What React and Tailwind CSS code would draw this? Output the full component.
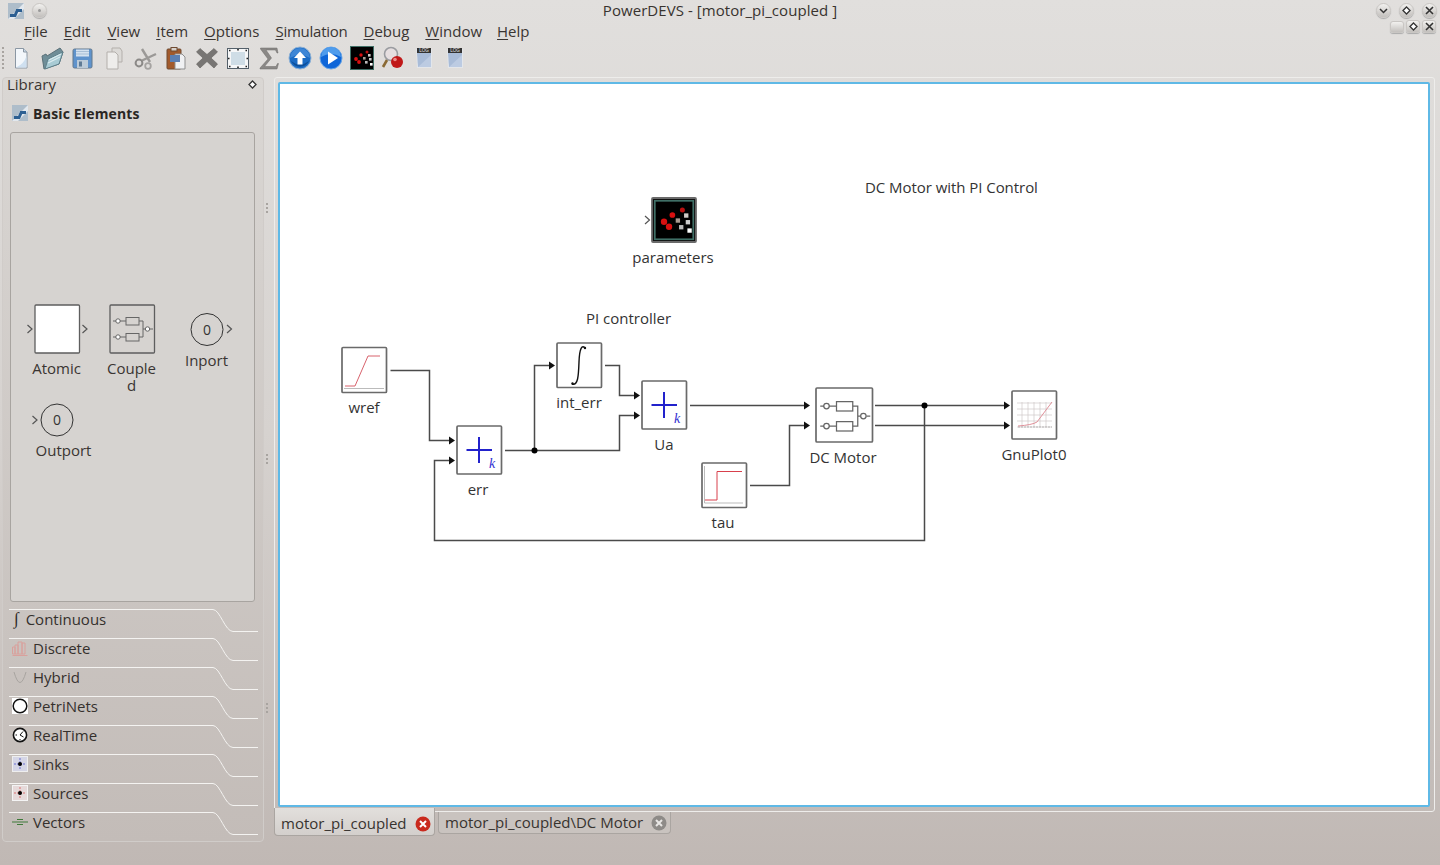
import { useState } from 'react';

const MENU = [
  { label: 'File' },
  { label: 'Edit' },
  { label: 'View', className: 'ml-[1px]' },
  { label: 'Item' },
  { label: 'Options' },
  { label: 'Simulation', className: 'tracking-[-0.25px]' },
  { label: 'Debug' },
  { label: 'Window' },
  { label: 'Help', className: '-ml-[1px]' },
];

function Mnemonic({ label, className = '' }) {
  return (
    <span className={`px-2 ${className}`}>
      <span className="underline decoration-1 underline-offset-2">{label[0]}</span>
      {label.slice(1)}
    </span>
  );
}

function AppIcon({ className = '' }) {
  return (
    <svg viewBox="0 0 16 16" className={className}>
      <rect width="16" height="16" fill="#aebdca" />
      <path d="M0 16 L16 0 V6 L6 16 Z" fill="#e2e8ee" />
      <path d="M2 12.5 H7 L9 8 M8 7.5 H14" fill="none" stroke="#2c5f92" strokeWidth="3" />
    </svg>
  );
}

function WinButton({ children, size = 'w-[15px] h-[15px] rounded-full' }) {
  return (
    <span className={`flex items-center justify-center ${size} bg-gradient-to-b from-[#f2f1ef] to-[#c3c0bd] border border-[#c9c6c3] shadow-[0_1px_1px_#aaa]`}>
      {children}
    </span>
  );
}

const ChevronGlyph = () => (
  <svg viewBox="0 0 9 9" className="w-[9px] h-[9px]"><path d="M1 3 L4.5 6.5 L8 3" fill="none" stroke="#333" strokeWidth="1.5" /></svg>
);
const DiamondGlyph = () => (
  <svg viewBox="0 0 9 9" className="w-[9px] h-[9px]"><path d="M4.5 1 L8 4.5 L4.5 8 L1 4.5 Z" fill="#fff" stroke="#333" strokeWidth="1.3" /></svg>
);
const CrossGlyph = () => (
  <svg viewBox="0 0 9 9" className="w-[9px] h-[9px]"><path d="M1 1 L8 8 M8 1 L1 8" fill="none" stroke="#333" strokeWidth="1.6" /></svg>
);

const ParamsArt = () => (
  <>
    <rect x="0.5" y="0.5" width="23" height="23" fill="#000" stroke="#3f6f66" />
    <circle cx="6" cy="13" r="1.9" fill="#d81010" /><circle cx="9" cy="16" r="1.9" fill="#d81010" />
    <circle cx="11" cy="9" r="1.7" fill="#d81010" /><circle cx="17" cy="6" r="1.5" fill="#b81010" />
    <rect x="13" y="11" width="2.6" height="2.6" fill="#a89a90" /><rect x="18" y="8" width="2.6" height="2.6" fill="#d0ccc8" />
    <rect x="19" y="12" width="2.6" height="2.6" fill="#ccc" /><rect x="15" y="15" width="2.6" height="2.6" fill="#bbb" />
    <rect x="20" y="17" width="2.6" height="2.6" fill="#fff" />
  </>
);

const LogIcon = () => (
  <>
    <path d="M4 3 H20 V22 H5 Z" fill="#e3e6ea" />
    <path d="M5 7 H19 V21 H6 Z" fill="#a9bcd8" />
    <path d="M6 21 L19 9 V21 Z" fill="#bccbe2" />
    <rect x="5" y="2" width="14" height="5" fill="#333" />
    <text x="12" y="6" fontSize="4.6" fill="#e8e8e8" textAnchor="middle" className="[font-family:'Liberation_Sans',sans-serif]">LOG</text>
  </>
);

// toolbar glyphs, all on a 24 box
const TOOLS = [
  <g key="new"><path d="M6.5 2.5 H14.5 L18 6 V22 H6.5 Z" fill="#f3f7fb" stroke="#8b97a3" /><path d="M14.5 2.5 V6 H18" fill="#c9d9e8" stroke="#8b97a3" /><path d="M7 21.5 H17.5 V10 Q15 18 7 21.5Z" fill="#cfe0f0" /></g>,
  <g key="open"><path d="M4 23 L2 10 L6 8 L7 10 L20 2 L23 6 L19 18 Z" fill="#6f8e98" stroke="#5a7078" /><path d="M5 23 L8 13 L23 6 L19 18 Z" fill="#a8cbd4" stroke="#5f808a" /><path d="M9 14 L21 8 M8 17 L20 11" fill="none" stroke="#dcecf0" strokeWidth="1.2" /></g>,
  <g key="save"><rect x="2" y="3" width="19" height="19" rx="1.5" fill="#5f93cc" stroke="#63788c" /><rect x="5" y="3.5" width="13" height="7" fill="#d5e2ef" /><path d="M5 5.5 H18 M5 8 H18" stroke="#a8bfd6" /><rect x="6" y="14" width="11" height="8" fill="#bccbd8" /><rect x="8" y="15.5" width="3" height="5" fill="#5e7a94" /></g>,
  <g key="copy"><path d="M10 2 H18 L20 5 V16 H10 Z" fill="#dcdad7" stroke="#b3afab" /><path d="M5 6 H13 L16 9 V23 H5 Z" fill="#eeedeb" stroke="#b3afab" /></g>,
  <g key="cut"><path d="M9 3 L17 16 M23 8 L8 15" fill="none" stroke="#9b9997" strokeWidth="2.4" /><circle cx="6" cy="17" r="3.4" fill="none" stroke="#8c8a88" strokeWidth="2" /><circle cx="15" cy="20" r="2.8" fill="none" stroke="#a5a3a1" strokeWidth="1.8" /></g>,
  <g key="paste"><rect x="3" y="3" width="14" height="20" rx="1" fill="#a25a2c" stroke="#6f4a30" /><rect x="7" y="1.5" width="6" height="3.5" fill="#d8d2cc" stroke="#6f4a30" /><path d="M11 8 H18 L21 11 V23 H11 Z" fill="#f0f1f3" stroke="#8f8f8f" /><rect x="6" y="9" width="10" height="7" fill="#5c7fb2" /></g>,
  <g key="delete"><path d="M5 2.5 L12 8.5 L19 2.5 L22.5 6 L16 12 L22.5 18 L19 22 L12 15.5 L5 22 L1.5 18 L8 12 L1.5 6 Z" fill="#787674" stroke="#625f5d" strokeWidth="0.6" /></g>,
  <g key="select"><rect x="1.5" y="2.5" width="21" height="20" fill="#f6f7f8" stroke="#54606a" /><rect x="5" y="6" width="14" height="13" fill="#cfdde6" /><path d="M12 3 v1.5 M12 20.5 v1.5 M2 12.5 h1.5 M20.5 12.5 h1.5 M3 4.5 h1.5 M19.5 4.5 h1.5 M3 20.5 h1.5 M19.5 20.5 h1.5" stroke="#222" strokeWidth="1.6" /></g>,
  <g key="sigma"><path d="M3.5 2 H20 L21 7 H20 L18.5 4 H9 L14.5 12 L7.5 20.5 H19 L20.5 17.5 H21.5 L20 23 H3 V22 L11 13 L3.5 3 Z" fill="#8a8886" stroke="#6e6c6a" strokeWidth="0.5" /></g>,
  <g key="up"><circle cx="12" cy="12" r="11" fill="#1a6bc4" stroke="#8fb2d6" /><path d="M2 12 A10 10 0 0 1 22 12 Q12 6 2 12" fill="#3d86d6" /><path d="M3 15 A10 10 0 0 0 21 15 Q12 22 3 15" fill="#0d4f9a" /><path d="M12 5.5 L18 12 H14.5 V18.5 H9.5 V12 H6 Z" fill="#fff" /></g>,
  <g key="play"><circle cx="12" cy="12" r="11" fill="#0f66d8" stroke="#6aa6e6" /><path d="M2 11 A10 10 0 0 1 22 11 Q12 5 2 11" fill="#4f9cec" /><path d="M9 5.5 L19 12 L9 18.5 Z" fill="#fff" /></g>,
  <g key="params"><ParamsArt /></g>,
  <g key="debug"><circle cx="10" cy="8" r="6.5" fill="#e6dfe0" stroke="#9a9ca0" strokeWidth="1.6" /><path d="M6 14 L2 21" stroke="#8a6a34" strokeWidth="2.6" /><circle cx="16" cy="16" r="6" fill="#c01818" /><circle cx="14" cy="13.5" r="1.8" fill="#ec8a8a" /></g>,
  <g key="log1"><LogIcon /></g>,
  <g key="log2"><LogIcon /></g>,
];

function Grip({ className = '', dots = [0, 1, 2] }) {
  return (
    <div className={`flex flex-col gap-[2px] ${className}`}>
      {dots.map((d) => <span key={d} className="w-[2px] h-[2px] bg-[#a8a4a0]" />)}
    </div>
  );
}

function Chevron({ x, y }) {
  return <path d={`M${x} ${y - 4} L${x + 4.5} ${y} L${x} ${y + 4}`} fill="none" stroke="#555" strokeWidth="1.2" />;
}

function CoupledArt({ x, y, s = 1 }) {
  return (
    <g transform={`translate(${x} ${y}) scale(${s})`} fill="none" stroke="#666" strokeWidth="1">
      <circle cx="6" cy="12" r="2.2" fill="#fff" />
      <circle cx="6" cy="28" r="2.2" fill="#fff" />
      <path d="M1 12 H4 M8 12 H14 M1 28 H4 M8 28 H14 M27 12 H31 V28 H27 M31 20 H33 M38 20 H41" />
      <rect x="14" y="8.5" width="13" height="7.5" />
      <rect x="14" y="24.5" width="13" height="7.5" />
      <circle cx="35.5" cy="20" r="2.2" fill="#fff" />
    </g>
  );
}

function AtomicTool() {
  return (
    <svg viewBox="19 303 75 58" className="w-[75px] h-[58px]">
      <Chevron x={27.5} y={329} /><Chevron x={82.5} y={329} />
      <rect x="35" y="305" width="44.5" height="48" rx="1" fill="#fff" stroke="#5e5e5e" strokeWidth="1.3" />
    </svg>
  );
}

function CoupledTool() {
  return (
    <svg viewBox="94 303 75 58" className="w-[75px] h-[58px]">
      <rect x="110" y="305" width="44.5" height="48" rx="1" fill="#d6d3d0" stroke="#5e5e5e" strokeWidth="1.3" />
      <CoupledArt x={112} y={309} />
    </svg>
  );
}

function PortCircle({ cx, cy }) {
  return (
    <>
      <circle cx={cx} cy={cy} r="16" fill="none" stroke="#333" strokeWidth="1" />
      <text x={cx} y={cy + 5} textAnchor="middle" fontSize="14" fill="#333" className="[font-family:'Open_Sans',sans-serif]">0</text>
    </>
  );
}

const SECTIONS = [
  { name: 'Continuous', icon: 'integral' },
  { name: 'Discrete', icon: 'discrete' },
  { name: 'Hybrid', icon: 'hybrid' },
  { name: 'PetriNets', icon: 'petri' },
  { name: 'RealTime', icon: 'clock' },
  { name: 'Sinks', icon: 'sinks' },
  { name: 'Sources', icon: 'sources' },
  { name: 'Vectors', icon: 'vectors' },
];

function SectionIcon({ type }) {
  if (type === 'integral') return null;
  return (
    <svg viewBox="0 0 16 16" className="w-4 h-4 shrink-0">
      {type === 'discrete' && <path d="M0.5 14 V7 H3 V14 V5 H6 V14 V2 H10 V14 V3 H13 V14 H0.5 M0.5 15.5 H15.5" fill="none" stroke="#d9a09c" strokeWidth="1" />}
      {type === 'hybrid' && <path d="M2 3 Q8 24 14 3" fill="none" stroke="#a8a4a0" strokeWidth="1" />}
      {type === 'petri' && <><rect width="16" height="16" fill="#fff" /><circle cx="8" cy="8" r="6.8" fill="#fff" stroke="#111" strokeWidth="1.5" /></>}
      {type === 'clock' && <><circle cx="8" cy="8" r="6.6" fill="#fff" stroke="#111" strokeWidth="1.6" /><path d="M8 8 L11 4.5 M8 8 L11.5 10 M3.5 8 H5 M8 12 V13" stroke="#111" strokeWidth="1" fill="none" /></>}
      {type === 'sinks' && <><rect x="0.5" y="0.5" width="15" height="15" fill="#d5d6e6" stroke="#eee" /><path d="M8 2 V14 M2 8 H14" stroke="#6a6fd0" strokeWidth="1" strokeDasharray="2 1" /><circle cx="8" cy="8" r="2" fill="#000" /></>}
      {type === 'sources' && <><rect x="0.5" y="0.5" width="15" height="15" fill="#e6dada" stroke="#f4f4f4" /><path d="M8 2 V14 M2 8 H14" stroke="#d87070" strokeWidth="1" strokeDasharray="2 1" /><circle cx="8" cy="8" r="2" fill="#000" /></>}
      {type === 'vectors' && <path d="M0 8 H4 M12 8 H16 M5 5.5 H11 M4 8 H12 M5 10.5 H11" stroke="#3f7a3a" strokeWidth="1.2" fill="none" />}
    </svg>
  );
}

function SectionTab({ name, icon }) {
  return (
    <div className="relative h-[29px] shrink-0 flex items-center">
      <svg viewBox="0 0 260 29" className="absolute left-0 top-0 w-[260px] h-[29px]">
        <path d="M6 0.5 H210 C217 0.5 222 22.5 230 22.5 H255" fill="none" stroke="#f4f3f1" strokeWidth="1" />
      </svg>
      <div className={`relative flex items-center gap-[5px] pb-[10px] ${icon === 'integral' ? 'pl-[11px]' : 'pl-[9px]'}`}>
        {icon === 'integral' && <span className="[font-family:'Liberation_Serif',serif] italic text-[17px] leading-none mr-[2px]">∫</span>}
        <SectionIcon type={icon} />
        <span className="text-[15px] leading-[20px] text-[#35302d]">{name}</span>
      </div>
    </div>
  );
}

function Block({ x, y, w, h, children }) {
  return (
    <g>
      <rect x={x} y={y} width={w} height={h} rx="1" fill="#fff" stroke="#6a6a6a" strokeWidth="1.7" />
      {children}
    </g>
  );
}

function SumArt({ x, y }) {
  return (
    <>
      <path d={`M${x + 9.5} ${y} H${x + 35} M${x + 22} ${y - 13} V${y + 13}`} stroke="#2222cc" strokeWidth="2" fill="none" />
      <text x={x + 35} y={y + 18} fontSize="14" fill="#2f2fd0" fontStyle="italic" textAnchor="middle" className="[font-family:'Liberation_Serif',serif]">k</text>
    </>
  );
}

function Arrow({ x, y }) {
  return <path d={`M${x - 6} ${y - 4} L${x} ${y} L${x - 6} ${y + 4} Z`} fill="#111" />;
}

const WIRES = [
  'M390.5 370.5 H429.5 V440.5 H450',
  'M505 450.5 H619.5 V415.5 H635',
  'M534.5 450.5 V365.5 H550',
  'M605 365.5 H619.5 V395.5 H635',
  'M690 405.5 H805',
  'M750 485.5 H789.5 V425.5 H805',
  'M875 405.5 H1005',
  'M875 425.5 H1005',
  'M924.5 405.5 V540.5 H434.5 V460.5 H450',
];

const ARROWS = [[455, 440.5], [455, 460.5], [555, 365.5], [640, 395.5], [640, 415.5], [810, 405.5], [810, 425.5], [1010, 405.5], [1010, 425.5]];

const LABELS = [
  { text: 'parameters', className: 'left-[393px] top-[163px]' },
  { text: 'wref', className: 'left-[84px] top-[313px]' },
  { text: 'err', className: 'left-[198px] top-[395px]' },
  { text: 'int_err', className: 'left-[299px] top-[308px]' },
  { text: 'Ua', className: 'left-[384px] top-[350px]' },
  { text: 'DC Motor', className: 'left-[563px] top-[363px]' },
  { text: 'GnuPlot0', className: 'left-[754px] top-[360px]' },
  { text: 'tau', className: 'left-[443px] top-[428px]' },
];

function Diagram() {
  return (
    <div className="relative flex-1 bg-white border-2 border-[#5fb9e6] rounded-[2px]">
      <svg viewBox="280 84 1148 721" className="absolute left-0 top-0 w-[1148px] h-[721px]">
        {/* wires */}
        {WIRES.map((d) => <path key={d} d={d} fill="none" stroke="#4a4a4a" strokeWidth="1.5" />)}
        {ARROWS.map(([x, y]) => <Arrow key={`${x}-${y}`} x={x} y={y} />)}
        <circle cx="534.5" cy="450.5" r="3" fill="#000" />
        <circle cx="924.5" cy="405.5" r="3" fill="#000" />

        {/* parameters */}
        <Chevron x={645} y={220} />
        <rect x="652" y="198" width="44" height="44" rx="1" fill="#111" stroke="#6a6a6a" strokeWidth="1.8" />
        <g transform="translate(654 200) scale(1.67)"><ParamsArt /></g>

        <Block x={342} y={347.5} w={44.5} h={45}>
          <path d="M345 386 H355 L368 356 H380" fill="none" stroke="#d8626c" strokeWidth="1" />
          <path d="M344 388.5 H384" stroke="#bbb" strokeWidth="1" />
        </Block>

        <Block x={457} y={426} w={44.5} h={48}><SumArt x={457} y={450} /></Block>

        <Block x={557} y={343} w={44.5} h={44.5}>
          <path d="M585.5 348.5 C582 344 579.5 348 579 362 C578.5 376 578 386 572 384" fill="none" stroke="#111" strokeWidth="1.4" />
          <circle cx="585" cy="348" r="1.2" fill="#111" />
          <circle cx="572.5" cy="383.5" r="1.2" fill="#111" />
        </Block>

        <Block x={642} y={381} w={44.5} h={48}><SumArt x={642} y={405} /></Block>

        <Block x={816} y={388} w={56.5} h={54}>
          <CoupledArt x={819} y={391} s={1.25} />
        </Block>

        <Block x={702} y={463} w={44.5} h={44.5}>
          <path d="M705 500 H717 V471.5 H742" fill="none" stroke="#d8404c" strokeWidth="1" />
          <path d="M704.5 466 V503 H743" fill="none" stroke="#aaa" strokeWidth="0.8" />
        </Block>

        <Block x={1012} y={391} w={44.5} h={48}>
          <path d="M1017 403 H1052 M1017 409 H1052 M1017 415 H1052 M1017 421 H1052 M1017 427 H1052 M1022 402 V427 M1028 402 V427 M1034 402 V427 M1040 402 V427 M1046 402 V427" stroke="#cfc9c9" strokeWidth="0.7" />
          <path d="M1018 427 H1052" stroke="#aaa" strokeWidth="0.8" strokeDasharray="2 1" />
          <path d="M1018 426 Q1032 425 1037 422 L1052 402" fill="none" stroke="#e0919a" strokeWidth="1" />
        </Block>
      </svg>

      <span className="absolute left-[585px] top-[93px] text-[15px] leading-[20px] text-[#333] whitespace-nowrap tracking-[-0.05px]">DC Motor with PI Control</span>
      <span className="absolute left-[306px] top-[224px] text-[15px] leading-[20px] text-[#333] whitespace-nowrap">PI controller</span>
      {LABELS.map((l) => (
        <span key={l.text} className={`absolute -translate-x-1/2 text-[15px] leading-[20px] text-[#333] whitespace-nowrap ${l.className}`}>{l.text}</span>
      ))}
    </div>
  );
}

export default function App() {
  const [activeTab] = useState(0);

  return (
    <div className="w-[1440px] h-[865px] overflow-hidden flex flex-col bg-gradient-to-b from-[#e1dfdd] via-[#d6d2cf] to-[#c0b8b4] text-[#2f2b28] [font-family:'Open_Sans',sans-serif]">
      {/* title bar */}
      <div className="h-[21px] shrink-0 relative flex items-center pl-2">
        <AppIcon className="w-4 h-4" />
        <span className="ml-[8px]">
          <WinButton><span className="w-[3px] h-[3px] rounded-full bg-[#999]" /></WinButton>
        </span>
        <span className="flex-1 text-center text-[15px] leading-[20px] tracking-[0.06px] text-[#38332f] pl-[17px] -translate-y-[1px]">PowerDEVS - [motor_pi_coupled ]</span>
        <div className="flex gap-2 pr-[3px]">
          <WinButton><ChevronGlyph /></WinButton>
          <WinButton><DiamondGlyph /></WinButton>
          <WinButton><CrossGlyph /></WinButton>
        </div>
      </div>

      {/* menu bar */}
      <div className="h-[22px] shrink-0 relative flex items-center pl-4 pb-[2px] text-[15px] leading-[20px] text-[#3a3532]">
        {MENU.map((m) => <Mnemonic key={m.label} label={m.label} className={m.className} />)}
        <div className="absolute right-[4px] -top-[1px] flex items-center gap-[2px]">
          <WinButton size="w-[14px] h-[12px] rounded-[3px]" />
          <WinButton size="w-[14px] h-[13px] rounded-[3px]"><DiamondGlyph /></WinButton>
          <WinButton size="w-[14px] h-[13px] rounded-[3px]"><CrossGlyph /></WinButton>
        </div>
      </div>

      {/* toolbar */}
      <div className="h-[34px] shrink-0 flex items-center pl-[2px] pb-[4px]">
        <Grip className="mr-[2px]" dots={[0, 1, 2, 3, 4, 5]} />
        <div className="flex gap-[7px] pl-[3px]">
          {TOOLS.map((t, i) => (
            <svg key={i} viewBox="0 0 24 24" className="w-6 h-6">{t}</svg>
          ))}
        </div>
      </div>

      {/* body */}
      <div className="flex-1 min-h-0 flex pl-[2px] pr-[5px]">
        {/* library dock */}
        <aside className="w-[262px] h-[765px] shrink-0 flex flex-col border border-[#d0ccc9] rounded-[4px] bg-gradient-to-b from-[#dad7d4] to-[#c3bcb8]">
          <div className="h-[13px] shrink-0 flex items-center justify-between pl-1 pr-[6px] text-[15px] text-[#3a3532]">
            <span>Library</span>
            <DiamondGlyph />
          </div>
          <div className="h-[41px] shrink-0 flex items-center gap-[5px] pl-[9px] pt-[3px]">
            <AppIcon className="w-4 h-4" />
            <span className="text-[14px] font-bold tracking-[0.15px] text-[#2a2623]">Basic Elements</span>
          </div>
          <div className="ml-[7px] w-[245px] h-[470px] shrink-0 rounded-[3px] border border-[#a8a4a0] bg-[#d6d3d0] pt-[170px] pl-[8px]">
            <div className="grid grid-cols-[75px_75px_75px] text-[15px] leading-[17px] text-[#3a3532] text-center">
              <div>
                <AtomicTool />
                <div className="-mt-[1px]">Atomic</div>
              </div>
              <div>
                <CoupledTool />
                <div className="w-[56px] -mt-[1px] mx-auto break-all">Coupled</div>
              </div>
              <div>
                <svg viewBox="169 303 75 50" className="w-[75px] h-[50px]">
                  <PortCircle cx={207} cy={329.5} />
                  <Chevron x={227} y={329} />
                </svg>
                <div className="-mt-[1px]">Inport</div>
              </div>
              <div className="mt-[2px]">
                <svg viewBox="19 396 75 48" className="w-[75px] h-[48px]">
                  <PortCircle cx={57} cy={420} />
                  <Chevron x={32.5} y={420} />
                </svg>
                <div className="-mt-[2px] translate-x-[7px]">Outport</div>
              </div>
            </div>
          </div>
          <div className="mt-[7px] flex flex-col">
            {SECTIONS.map((s) => <SectionTab key={s.name} name={s.name} icon={s.icon} />)}
          </div>
        </aside>

        {/* splitter */}
        <div className="w-[10px] shrink-0 flex flex-col items-center h-[765px] relative">
          <Grip className="absolute top-[126px] -translate-x-[2px]" />
          <Grip className="absolute top-[377px] -translate-x-[2px]" />
          <Grip className="absolute top-[626px] -translate-x-[2px]" />
        </div>

        {/* mdi area */}
        <main className="flex-1 min-w-0 flex flex-col">
          <div className="h-[735px] shrink-0 flex pt-[4px] pb-[4px] pl-[3px] pr-[4px] rounded-[3px] border border-[#eeedeb]">
            <Diagram />
          </div>
          <div className="flex items-start pl-0">
            <div className={`${activeTab === 0 ? 'h-[28px] -mt-[4px]' : ''} relative w-[161px] flex items-center justify-between pl-[6px] pr-[3px] pt-[4px] rounded-b-[4px] border border-t-0 border-[#aaa5a1] bg-gradient-to-b from-[#e2dfdc] to-[#d3cfcc] text-[15px] text-[#38332f]`}>
              <span>motor_pi_coupled</span>
              <svg viewBox="0 0 16 16" className="w-4 h-4 shrink-0">
                <circle cx="8" cy="8" r="7.5" fill="#c92a1e" />
                <path d="M5 5 L11 11 M11 5 L5 11" stroke="#fff" strokeWidth="2" />
              </svg>
            </div>
            <div className="ml-[3px] h-[22px] w-[233px] flex items-center justify-between pl-[6px] pr-[3px] rounded-b-[4px] border border-t-0 border-[#aaa5a1] bg-[#c9c3bf] text-[15px] text-[#38332f]">
              <span>motor_pi_coupled\DC Motor</span>
              <svg viewBox="0 0 16 16" className="w-4 h-4 shrink-0">
                <circle cx="8" cy="8" r="7.5" fill="#8e8b88" />
                <path d="M5 5 L11 11 M11 5 L5 11" stroke="#e8e6e4" strokeWidth="2" />
              </svg>
            </div>
          </div>
        </main>
      </div>
    </div>
  );
}
